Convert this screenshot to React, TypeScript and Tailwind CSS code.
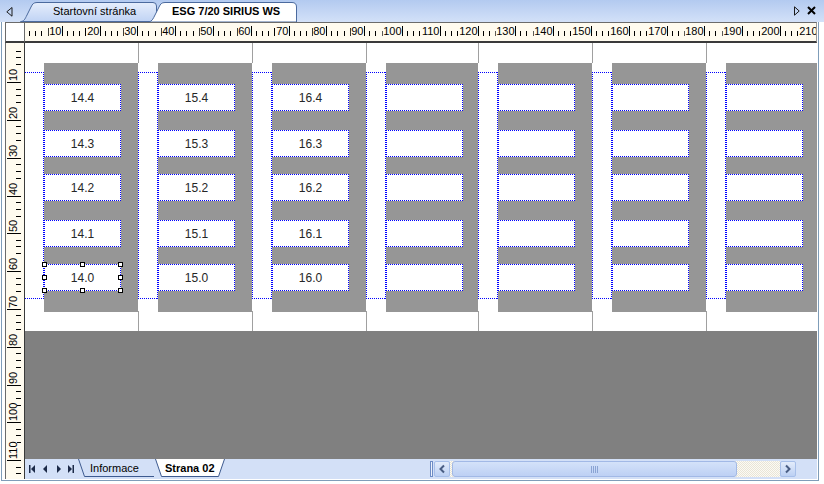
import React from "react";

const MM = 37.8;
const CREAM = "#fffbef";

const DOT4 =
  "[background-image:linear-gradient(to_right,#0000ff_50%,transparent_50%),linear-gradient(to_right,#0000ff_50%,transparent_50%),linear-gradient(to_bottom,#0000ff_50%,transparent_50%),linear-gradient(to_bottom,#0000ff_50%,transparent_50%)] [background-size:2px_1px,2px_1px,1px_2px,1px_2px] [background-position:0_0,0_100%,0_0,100%_0] [background-repeat:repeat-x,repeat-x,repeat-y,repeat-y]";
const DOT3 =
  "[background-image:linear-gradient(to_right,#0000ff_50%,transparent_50%),linear-gradient(to_right,#0000ff_50%,transparent_50%),linear-gradient(to_bottom,#0000ff_50%,transparent_50%)] [background-size:2px_1px,2px_1px,1px_2px] [background-position:0_0,0_100%,100%_0] [background-repeat:repeat-x,repeat-x,repeat-y]";

function HRuler() {
  const lines: React.ReactNode[] = [];
  const labels: React.ReactNode[] = [];
  const px = (p: number) => Math.floor(p) - 25 + 0.5;
  for (let k = 0; k <= 21; k++) {
    const p = 24.5 + MM * k;
    [5, 11, 17.3].forEach((d, i) => {
      const x = px(p + d);
      lines.push(<line key={`s${k}-${i}`} x1={x} x2={x} y1={8} y2={13} />);
    });
    const xt = px(p + 23.5);
    lines.push(<line key={`t${k}`} x1={xt} x2={xt} y1={5} y2={13} />);
  }
  for (let k = 1; k <= 21; k++) {
    const p = 24.5 + MM * k;
    const x = px(p);
    const label = String(k * 10);
    const w = label.length * 6.12;
    labels.push(
      <rect key={`r${k}`} x={x - 1.5 - w} y={2} width={w + 0.5} height={11} fill={CREAM} />
    );
    labels.push(
      <text key={`l${k}`} x={x - 1} y={11.5} textAnchor="end" fill="#000" fontSize={11} fontFamily="Liberation Sans, Arial, sans-serif">
        {label}
      </text>
    );
    labels.push(<line key={`m${k}`} x1={x} x2={x} y1={3} y2={13} stroke="#000" />);
  }
  return (
    <svg width={791} height={18} className="block">
      <g stroke="#000" strokeWidth={1}>{lines}</g>
      {labels}
    </svg>
  );
}

function VRuler() {
  const lines: React.ReactNode[] = [];
  const labels: React.ReactNode[] = [];
  const py = (p: number) => Math.floor(p) - 43 + 0.5;
  for (let k = 0; k <= 12; k++) {
    const p = 44.8 + MM * k;
    [6.5, 13, 20].forEach((d, i) => {
      const y = py(p + d);
      lines.push(<line key={`s${k}-${i}`} x1={10} x2={15} y1={y} y2={y} />);
    });
  }
  for (let k = 1; k <= 11; k++) {
    const p = 44.8 + MM * k;
    const y = py(p);
    const label = String(k * 10);
    const w = label.length * 6.12;
    labels.push(<rect key={`r${k}`} x={2} y={y - 2 - w} width={9} height={w + 0.5} fill={CREAM} />);
    labels.push(
      <text
        key={`l${k}`}
        transform={`translate(10.5 ${y - 1.5}) rotate(-90)`}
        textAnchor="start"
        fill="#000"
        fontSize={11}
        fontFamily="Liberation Sans, Arial, sans-serif"
      >
        {label}
      </text>
    );
    labels.push(<line key={`m${k}`} x1={1} x2={15} y1={y} y2={y} stroke="#000" />);
  }
  return (
    <svg width={18} height={436} className="block">
      <g stroke="#000" strokeWidth={1}>{lines}</g>
      {labels}
    </svg>
  );
}

function Handle({ pos }: { pos: string }) {
  return <div className={`absolute w-[5px] h-[5px] border border-black bg-white ${pos}`} />;
}

function TextBox({ label, selected, gap }: { label?: string; selected?: boolean; gap: string }) {
  return (
    <div
      className={`relative w-[77px] h-[27px] shrink-0 bg-white ${DOT4} flex items-center justify-center text-[12px] text-[#262626] ${gap}`}
    >
      {label}
      {selected && (
        <>
          <Handle pos="-left-[2px] -top-[2px]" />
          <Handle pos="left-[36px] -top-[2px]" />
          <Handle pos="-right-[2px] -top-[2px]" />
          <Handle pos="-left-[2px] top-[11px]" />
          <Handle pos="-right-[2px] top-[11px]" />
          <Handle pos="-left-[2px] -bottom-[2px]" />
          <Handle pos="left-[36px] -bottom-[2px]" />
          <Handle pos="-right-[2px] -bottom-[2px]" />
        </>
      )}
    </div>
  );
}

const GAPS = ["", "mt-[19px]", "mt-[17px]", "mt-[19px]", "mt-[17px]"];

function Cell({ k, prefix, width }: { k: number; prefix?: number; width: string }) {
  const divider = k > 0 ? "border-l border-[#a0a0a0]" : "";
  const dotted = k > 0 ? DOT4 : DOT3;
  const gapW = k > 0 ? "w-[20px]" : "w-[19px]";
  const nums = [4, 3, 2, 1, 0];
  return (
    <div className={`flex shrink-0 h-[288px] ${width}`}>
      <div className={`${gapW} shrink-0 flex flex-col`}>
        <div className={`h-[20px] ${divider}`} />
        <div className="h-[9px]" />
        <div className={`h-[227px] ${dotted}`} />
        <div className="h-[12px]" />
        <div className={`h-[20px] ${divider}`} />
      </div>
      <div className="flex-1 mt-[20px] h-[249px] bg-[#969696] pt-[21px] flex flex-col">
        {nums.map((n, i) => (
          <TextBox
            key={n}
            gap={GAPS[i]}
            label={prefix !== undefined ? `${prefix}.${n}` : undefined}
            selected={k === 0 && n === 0}
          />
        ))}
      </div>
    </div>
  );
}

function TopTabs() {
  return (
    <div className="h-[22px] flex items-start bg-linear-to-b from-[#b3caf0] to-[#d3e1f8]">
      <svg width={7} height={10} className="ml-[6px] mt-[7px] shrink-0">
        <path d="M6,0.5 L0.8,4.8 L6,9.2 Z" fill="none" stroke="#1a1a1a" strokeWidth={1} />
      </svg>
      <div className="relative ml-[7px] w-[137px] h-[22px] shrink-0">
        <svg width={137} height={22} className="absolute inset-0">
          <defs>
            <linearGradient id="t1" x1="0" y1="0" x2="0" y2="1">
              <stop offset="0" stopColor="#e6eefc" />
              <stop offset="1" stopColor="#c0d3f4" />
            </linearGradient>
          </defs>
          <path
            d="M0.5,21.5 C4,21.5 5,19 7,15 L11,7 C12.5,4 13.5,2.5 17,2.5 L133,2.5 Q136.5,2.5 136.5,6 L136.5,21.5 Z"
            fill="url(#t1)"
            stroke="#4b6a9e"
          />
        </svg>
        <span className="relative block pt-[1px] pl-[33px] text-[11px] leading-[20px] text-black whitespace-nowrap">
          Startovní stránka
        </span>
      </div>
      <div className="relative -ml-[9px] w-[149px] h-[22px] shrink-0">
        <svg width={149} height={22} className="absolute inset-0">
          <path
            d="M0.5,22 C4,21.5 5,19 7,15 L11,7 C12.5,4 13.5,2.5 17,2.5 L144,2.5 Q148.5,2.5 148.5,7 L148.5,22 Z"
            fill="#ffffff"
            stroke="#4b6a9e"
          />
        </svg>
        <span className="relative block pt-[1px] pl-[24px] text-[11px] leading-[20px] font-bold text-black whitespace-nowrap">
          ESG 7/20 SIRIUS WS
        </span>
      </div>
      <div className="flex-1" />
      <svg width={6} height={10} className="mt-[6px] shrink-0">
        <path d="M0.5,0.8 L5.2,5 L0.5,9.2 Z" fill="none" stroke="#1a1a1a" strokeWidth={1} />
      </svg>
      <svg width={9} height={9} className="ml-[7px] mt-[6px] mr-[8px] shrink-0">
        <path d="M1,1 L8,8 M8,1 L1,8" stroke="#000" strokeWidth={2} />
      </svg>
    </div>
  );
}

function BottomBar() {
  return (
    <div className="h-[20px] bg-[#d3e0f7] flex items-stretch">
      <svg width={6} height={8} className="ml-[4px] self-center shrink-0">
        <rect x={0} y={0} width={1.5} height={8} fill="#1c2a48" />
        <path d="M6,0 L2,4 L6,8 Z" fill="#1c2a48" />
      </svg>
      <svg width={4} height={8} className="ml-[8px] self-center shrink-0">
        <path d="M4,0 L0,4 L4,8 Z" fill="#1c2a48" />
      </svg>
      <svg width={4} height={8} className="ml-[10px] self-center shrink-0">
        <path d="M0,0 L4,4 L0,8 Z" fill="#1c2a48" />
      </svg>
      <svg width={6} height={8} className="ml-[7px] self-center shrink-0">
        <path d="M0,0 L4,4 L0,8 Z" fill="#1c2a48" />
        <rect x={4.5} y={0} width={1.5} height={8} fill="#1c2a48" />
      </svg>
      <div className="relative ml-[4px] w-[82px] shrink-0">
        <svg width={82} height={20} className="absolute inset-0">
          <path d="M0.5,0 L6.5,17.5 L76,17.5" fill="none" stroke="#3d5a8f" />
        </svg>
        <span className="relative block pl-[12px] text-[11px] leading-[18px] text-black">Informace</span>
      </div>
      <div className="relative -ml-[5px] w-[70px] shrink-0">
        <svg width={70} height={20} className="absolute inset-0">
          <path d="M0.5,0 L6.5,17.5 L63.5,17.5 L69.5,0" fill="#ffffff" stroke="#3d5a8f" />
        </svg>
        <span className="relative block pl-[10px] text-[11px] leading-[18px] font-bold text-black">Strana 02</span>
      </div>
      <div className="ml-[205px] mt-[2px] w-[3px] h-[16px] border border-[#6d8cc6] bg-[#eef3fc] shrink-0" />
      <div className="ml-[1px] mt-[2px] w-[16px] h-[16px] rounded-[2px] border border-[#a7bfe9] bg-linear-to-b from-[#e3ecfb] to-[#bcd0f3] flex items-center justify-center shrink-0">
        <svg width={8} height={10}>
          <path d="M6,1.5 L2.5,5 L6,8.5" fill="none" stroke="#4a5e84" strokeWidth={2} />
        </svg>
      </div>
      <div className="mt-[2px] w-[330px] h-[16px] shrink-0 bg-[repeating-conic-gradient(#e9e5d6_0%_25%,#fbfaf5_0%_50%)] bg-[length:2px_2px]">
        <div className="ml-[2px] w-[285px] h-[16px] rounded-[3px] border border-[#a2b9e6] bg-linear-to-b from-[#d4e2f9] to-[#bdd0f4] flex items-center justify-center">
          <div className="flex gap-[1px]">
            <div className="w-[1px] h-[7px] bg-[#8aa3d3]" />
            <div className="w-[1px] h-[7px] bg-[#8aa3d3]" />
            <div className="w-[1px] h-[7px] bg-[#8aa3d3]" />
            <div className="w-[1px] h-[7px] bg-[#8aa3d3]" />
          </div>
        </div>
      </div>
      <div className="mt-[2px] w-[16px] h-[16px] rounded-[2px] border border-[#a7bfe9] bg-linear-to-b from-[#e3ecfb] to-[#bcd0f3] flex items-center justify-center shrink-0">
        <svg width={8} height={10}>
          <path d="M2,1.5 L5.5,5 L2,8.5" fill="none" stroke="#4a5e84" strokeWidth={2} />
        </svg>
      </div>
    </div>
  );
}

const CELLS: { prefix?: number; width: string }[] = [
  { prefix: 14, width: "w-[113px]" },
  { prefix: 15, width: "w-[114px]" },
  { prefix: 16, width: "w-[114px]" },
  { width: "w-[112px]" },
  { width: "w-[114px]" },
  { width: "w-[114px]" },
  { width: "w-[114px]" },
];

export default function App() {
  return (
    <div className="w-[824px] h-[484px] bg-white overflow-hidden font-['Liberation_Sans',Arial,sans-serif]">
      <TopTabs />
      <div className="ml-[1px] w-[818px] h-[459px] border-x border-b border-[#7f9db9] pl-[3px] pr-[1px] pb-[1px] bg-white">
        <div className="grid grid-cols-[20px_792px] grid-rows-[21px_436px]">
          <div className="border border-b-2 border-[#6b6b6b] border-b-[#3a3a3a] bg-white" />
          <div className="border-t border-b-2 border-r border-t-[#6b6b6b] border-b-[#3a3a3a] border-r-[#9a9a9a] bg-[#fffbef] overflow-hidden">
            <HRuler />
          </div>
          <div className="border-x border-l-[#6b6b6b] border-r-[#3a3a3a] bg-[#fffbef] overflow-hidden">
            <VRuler />
          </div>
          <div className="flex flex-col">
            <div className="h-[288px] flex overflow-hidden bg-white">
              {CELLS.map((c, k) => (
                <Cell key={k} k={k} prefix={c.prefix} width={c.width} />
              ))}
            </div>
            <div className="h-[128px] bg-[#808080]" />
            <BottomBar />
          </div>
        </div>
      </div>
    </div>
  );
}
